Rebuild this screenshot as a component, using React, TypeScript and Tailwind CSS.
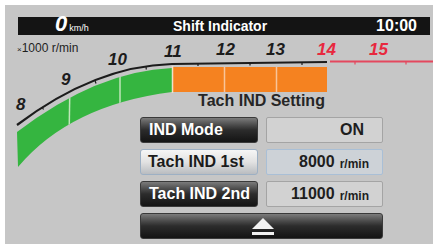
import React from 'react';

const darkBtn =
  'flex items-center h-[26px] rounded-[3px] bg-linear-to-b from-[#7c7c7c] via-[#2c2c2c] to-[#141414] border border-[#3a3a3a] text-white font-bold text-[16px] leading-none pl-[8px]';
const lightBtn =
  'flex items-center h-[26px] rounded-[3px] bg-linear-to-b from-[#f6f6f6] via-[#e2e2e2] to-[#b9bcc0] border border-[#9db0c4] text-[#1b1b1b] font-bold text-[16px] leading-none pl-[7px]';

function Value({ num, unit, active }: { num: string; unit?: string; active?: boolean }) {
  return (
    <div
      className={`flex items-center justify-end h-[26px] rounded-[2px] border text-[#1e1e1e] font-bold ${
        active ? 'bg-[#cdd2d7] border-[#a9bfd6]' : 'bg-[#d2d2d2] border-[#a4a4a4]'
      } ${unit ? 'pr-[13px]' : 'pr-[18px]'}`}
    >
      <span className="text-[16px] leading-none">{num}</span>
      {unit && <span className="ml-[5px] text-[12px] leading-none mt-[3px]">{unit}</span>}
    </div>
  );
}

function Gauge() {
  const label = { fontFamily: '"Liberation Sans", Arial, sans-serif', fontWeight: 700, fontStyle: 'italic', fontSize: 17 };
  return (
    <svg className="absolute left-0 top-0" width={428} height={239} viewBox="5 5 428 239">
      <defs>
        <clipPath id="green">
          <path d="M17 132 Q97 71 172 68 L172 92 Q70 105 18 167 Z" />
        </clipPath>
      </defs>
      <path d="M17 132 Q97 71 172 68 L172 92 Q70 105 18 167 Z" fill="#35b540" />
      <g clipPath="url(#green)" stroke="#bfe6b8" strokeWidth={1.5}>
        <line x1={70} y1={80} x2={69} y2={140} />
        <line x1={120} y1={65} x2={120} y2={115} />
      </g>
      <rect x={173} y={67} width={154} height={25} fill="#f58220" />
      <line x1={172.5} y1={66} x2={172.5} y2={93} stroke="#f0e0c8" strokeWidth={1.5} />
      <line x1={224.5} y1={67} x2={224.5} y2={92} stroke="#f8c49a" strokeWidth={1.5} />
      <line x1={276.5} y1={67} x2={276.5} y2={92} stroke="#f8c49a" strokeWidth={1.5} />
      <path d="M17 125 Q95 66 172 64 L327 62" fill="none" stroke="#1c1c1c" strokeWidth={2.2} />
      <g stroke="#1c1c1c" strokeWidth={1.2}>
        <line x1={42} y1={107} x2={43.5} y2={109.5} />
        <line x1={95} y1={80.5} x2={96} y2={83.5} />
        <line x1={146} y1={66.5} x2={146.3} y2={69.5} />
        <line x1={198} y1={63} x2={198} y2={66} />
        <line x1={250} y1={62.5} x2={250} y2={65.5} />
        <line x1={302} y1={62} x2={302} y2={65} />
      </g>
      <line x1={330} y1={61.5} x2={433} y2={61.5} stroke="#e4485e" strokeWidth={2} />
      <g stroke="#e4485e" strokeWidth={1.2}>
        <line x1={355} y1={61.5} x2={355} y2={64.5} />
        <line x1={406} y1={61.5} x2={406} y2={64.5} />
      </g>
      <g style={label} fill="#1c1c1c">
        <text x={16} y={110}>8</text>
        <text x={61} y={85}>9</text>
        <text x={108} y={65}>10</text>
        <text x={164} y={57}>11</text>
        <text x={216} y={55}>12</text>
        <text x={266} y={55}>13</text>
      </g>
      <g style={label} fill="#e8283e">
        <text x={317} y={55}>14</text>
        <text x={369} y={55}>15</text>
      </g>
    </svg>
  );
}

export default function App() {
  return (
    <div className="w-[440px] h-[250px] bg-white pt-[5px] pl-[5px]">
      <div className="relative w-[428px] h-[239px] bg-[#c6c6c6] pt-[12px] pl-[13px] pr-[3px] font-['Liberation_Sans',Arial,sans-serif]">
        <Gauge />

        <div className="relative flex items-center h-[18px] bg-[#141414] text-white font-bold">
          <div className="w-[155px] pl-[37px] flex items-baseline leading-[18px]">
            <span className="text-[22px] italic">0</span>
            <span className="text-[9px] font-normal ml-[2px]">km/h</span>
          </div>
          <span className="text-[14px] leading-[18px]">Shift Indicator</span>
          <span className="ml-auto pr-[13px] text-[16px] leading-[18px]">10:00</span>
        </div>

        <div className="relative mt-[7px] -ml-px text-[12px] leading-[13px] text-[#1e1e1e]">
          <span className="text-[8px]">×</span>1000 r/min
        </div>

        <div className="relative ml-[122px] mt-[36px] w-[243px]">
          <div className="text-center text-[16px] leading-[18px] font-bold text-[#262626]">Tach IND Setting</div>
          <div className="mt-[7px] grid grid-cols-2 gap-x-[8px] gap-y-[6px]">
            <div className={darkBtn}>IND Mode</div>
            <Value num="ON" />
            <div className={lightBtn}>Tach IND 1st</div>
            <Value num="8000" unit="r/min" active />
            <div className={darkBtn}>Tach IND 2nd</div>
            <Value num="11000" unit="r/min" />
            <div className="col-span-2 flex items-center justify-center h-[26px] rounded-[3px] bg-linear-to-b from-[#7c7c7c] via-[#2c2c2c] to-[#141414] border border-[#3a3a3a]">
              <svg width={22} height={19} viewBox="0 0 22 19" className="mt-[1px] ml-[2px]">
                <polygon points="0,12 22,12 11,1" fill="#f2f2f2" />
                <rect x={0} y={15} width={22} height={3} fill="#f2f2f2" />
              </svg>
            </div>
          </div>
        </div>
      </div>
    </div>
  );
}
